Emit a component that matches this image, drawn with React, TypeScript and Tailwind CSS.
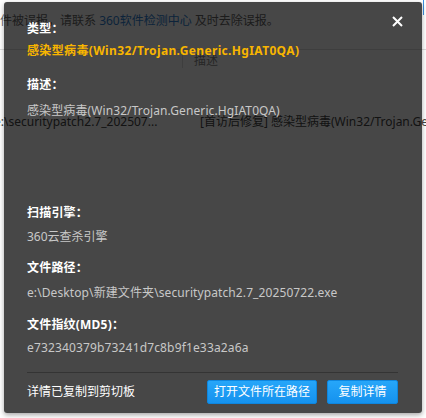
import React from "react";

const font = { fontFamily: '"Noto Sans", "Noto Sans CJK SC", sans-serif' };

function Background() {
  return (
    <div className="relative w-[426px] h-[418px] bg-white overflow-hidden text-[12px] text-[#666]" style={font}>
      <div className="absolute left-[20px] top-[-20px] text-[16px] font-bold text-[#333]">病毒检测结果</div>
      <div className="absolute left-[-12px] top-[11px] leading-[20px] whitespace-nowrap">
        文件被误报，请联系 <span className="text-[#2f7fd1]">360软件检测中心</span> 及时去除误报。
      </div>
      <div className="absolute left-0 top-[49px] w-[426px] h-px bg-[#ddd]" />
      <div className="absolute left-[182px] top-[50px] w-px h-[18px] bg-[#ddd]" />
      <div className="absolute left-[194px] top-[51px] leading-[20px] text-[#888]">描述</div>
      <div className="absolute left-[-6px] top-[112px] leading-[20px] whitespace-nowrap text-[#444]">
        e:\securitypatch2.7_202507...
      </div>
      <div className="absolute left-[200px] top-[112px] leading-[20px] whitespace-nowrap text-[#444]">
        [首访后修复] 感染型病毒(Win32/Trojan.Generic)
      </div>
      <div className="absolute left-[423px] top-0 w-px h-[15px] bg-[#3b8fe0]" />
    </div>
  );
}

function Label({ children, mt }: { children: React.ReactNode; mt: string }) {
  return <div className={`${mt} leading-[20px] font-bold text-white tracking-[0.2px]`}>{children}</div>;
}

export default function App() {
  return (
    <div className="relative w-[426px] h-[418px]" style={font}>
      <Background />
      <div className="absolute left-[4px] top-[2px] w-[418px] h-[411px] rounded-[3px] bg-black/[0.72] shadow-[0_2px_5px_rgba(0,0,0,0.35)] text-[12px] pl-[23px] pr-[24px] pt-[17px] flex flex-col">
        <button className="absolute right-[18px] top-[12px] w-[14px] h-[14px] flex items-center justify-center">
          <svg width="11" height="11" viewBox="0 0 11 11">
            <path d="M1 1 L10 10 M10 1 L1 10" stroke="white" strokeWidth="2" />
          </svg>
        </button>
        <Label mt="mt-0">类型：</Label>
        <div className="mt-[2px] leading-[20px] font-bold text-[#f8b500] tracking-[0.35px]">感染型病毒(Win32/Trojan.Generic.HgIAT0QA)</div>
        <Label mt="mt-[14px]">描述：</Label>
        <div className="mt-[6px] leading-[20px] text-[#c8c8c8] tracking-[0.1px]">感染型病毒(Win32/Trojan.Generic.HgIAT0QA)</div>
        <Label mt="mt-[82px]">扫描引擎：</Label>
        <div className="mt-[4px] leading-[20px] text-[#c8c8c8]">360云查杀引擎</div>
        <Label mt="mt-[11px]">文件路径：</Label>
        <div className="mt-[5px] leading-[20px] text-[#c8c8c8] whitespace-nowrap tracking-[0.1px]">e:\Desktop\新建文件夹\securitypatch2.7_20250722.exe</div>
        <Label mt="mt-[12px]">文件指纹(MD5)：</Label>
        <div className="mt-[3px] leading-[20px] text-[#c8c8c8] tracking-[0.15px]">e732340379b73241d7c8b9f1e33a2a6a</div>
        <div className="mt-[14px] h-px bg-[#343434]" />
        <div className="mt-[7px] flex items-center">
          <div className="flex-1 text-white leading-[20px]">详情已复制到剪切板</div>
          <button className="h-[24px] w-[110px] rounded-[2px] border border-[#0e86de] bg-gradient-to-b from-[#26a6f9] to-[#1592ee] text-white text-[12px] leading-[22px]">
            打开文件所在路径
          </button>
          <button className="ml-[10px] h-[24px] w-[71px] rounded-[2px] border border-[#0e86de] bg-gradient-to-b from-[#26a6f9] to-[#1592ee] text-white text-[12px] leading-[22px]">
            复制详情
          </button>
        </div>
      </div>
    </div>
  );
}
